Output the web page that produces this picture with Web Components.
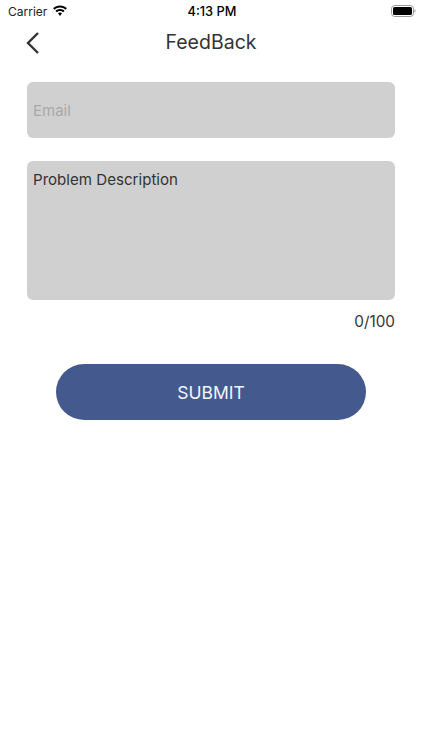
<!DOCTYPE html>
<html>
<head>
<meta charset="utf-8">
<title>FeedBack</title>
<style>
html,body{margin:0;padding:0;background:#fff;}
body{width:422px;height:750px;overflow:hidden;font-family:Inter,"Liberation Sans",sans-serif;}
</style>
</head>
<body>
<feedback-page></feedback-page>
<script>
class StatusBar extends HTMLElement {
    constructor() {
        super();
        this.attachShadow({mode: 'open'}).innerHTML = /*html*/`
<style>
:host{display:grid;grid-template-columns:1fr auto 1fr;align-items:center;height:22px;padding:0 6px 0 8px;color:#000;}
.left{display:flex;align-items:center;gap:5px;font-size:12px;color:#222;}
.time{font-size:12.8px;font-weight:500;}
.right{display:flex;justify-content:flex-end;}
svg{display:block;}
</style>
<div class="left"><span>Carrier</span>
<svg width="16" height="12" viewBox="0 0 16 12"><path fill="#000" d="M8 2.600c2.100 0 4 .8 5.400 2.100l1.500-1.500C13.100 1.500 10.700.5 8 .5S2.900 1.500 1.100 3.200l1.500 1.500C4 3.400 5.900 2.600 8 2.600z"/><path fill="#000" d="M8 6c1.200 0 2.300.5 3.100 1.200l1.500-1.500C11.400 4.600 9.800 3.900 8 3.900s-3.400.7-4.600 1.800l1.500 1.500C5.700 6.500 6.800 6 8 6z"/><path fill="#000" d="M8 7.500c-.8 0-1.500.3-2 .8l2 2.700 2-2.700c-.5-.5-1.200-.8-2-.8z"/></svg>
</div>
<div class="time">4:13 PM</div>
<div class="right">
<svg width="25" height="12" viewBox="0 0 25 12"><rect x=".5" y=".5" width="22" height="11" rx="3.200" fill="none" stroke="#999"/><rect x="2" y="2" width="19" height="8" rx="1.600" fill="#000"/><rect x="23.500" y="4.500" width="1" height="3" rx=".5" fill="#999"/></svg>
</div>`
    }
}
customElements.define('status-bar', StatusBar)

class NavBar extends HTMLElement {
    constructor() {
        super();
        this.attachShadow({mode: 'open'}).innerHTML = /*html*/`
<style>
:host{display:grid;grid-template-columns:1fr auto 1fr;align-items:center;height:40px;padding:0 27px;color:#333;}
.title{font-size:19.5px;line-height:40px;}
svg{display:block;margin:1px 0 0 -1px;}
</style>
<svg width="14" height="22" viewBox="0 0 14 22"><path d="M12 1 L2 11 L12 21" fill="none" stroke="#333" stroke-width="2.400"/></svg>
<div class="title"><slot></slot></div>
<span></span>`
    }
}
customElements.define('nav-bar', NavBar)

class GreyField extends HTMLElement {
    constructor() {
        super();
        this.attachShadow({mode: 'open'}).innerHTML = /*html*/`
<style>
:host{display:block;background:#d0d0d0;border-radius:6px;padding:0 6px;font-size:15.1px;color:#333;}
:host([placeholder]){display:flex;align-items:center;height:56px;color:#a8a8a8;font-size:15px;}
:host([tall]){height:139px;padding-top:9px;box-sizing:border-box;line-height:20px;}
</style>
<slot></slot>`
    }
}
customElements.define('grey-field', GreyField)

class SubmitButton extends HTMLElement {
    constructor() {
        super();
        this.attachShadow({mode: 'open'}).innerHTML = /*html*/`
<style>
:host{display:flex;align-items:center;justify-content:center;height:56px;width:310px;border-radius:28px;background:#445a8e;color:#f4f6fb;font-size:17.5px;}
</style>
<slot></slot>`
    }
}
customElements.define('submit-button', SubmitButton)

class FeedbackPage extends HTMLElement {
    constructor() {
        super();
        this.attachShadow({mode: 'open'}).innerHTML = /*html*/`
<style>
:host{display:block;width:422px;height:750px;background:#fff;}
.form{display:flex;flex-direction:column;padding:20px 27px 0 27px;}
.count{text-align:right;font-size:15.3px;color:#333;line-height:20px;margin-top:12px;}
grey-field + grey-field{margin-top:23px;}
submit-button{align-self:center;margin-top:32px;}
</style>
<status-bar></status-bar>
<nav-bar>FeedBack</nav-bar>
<div class="form">
    <grey-field placeholder>Email</grey-field>
    <grey-field tall>Problem Description</grey-field>
    <div class="count">0/100</div>
    <submit-button>SUBMIT</submit-button>
</div>`
    }
}
customElements.define('feedback-page', FeedbackPage)
</script>
</body>
</html>
